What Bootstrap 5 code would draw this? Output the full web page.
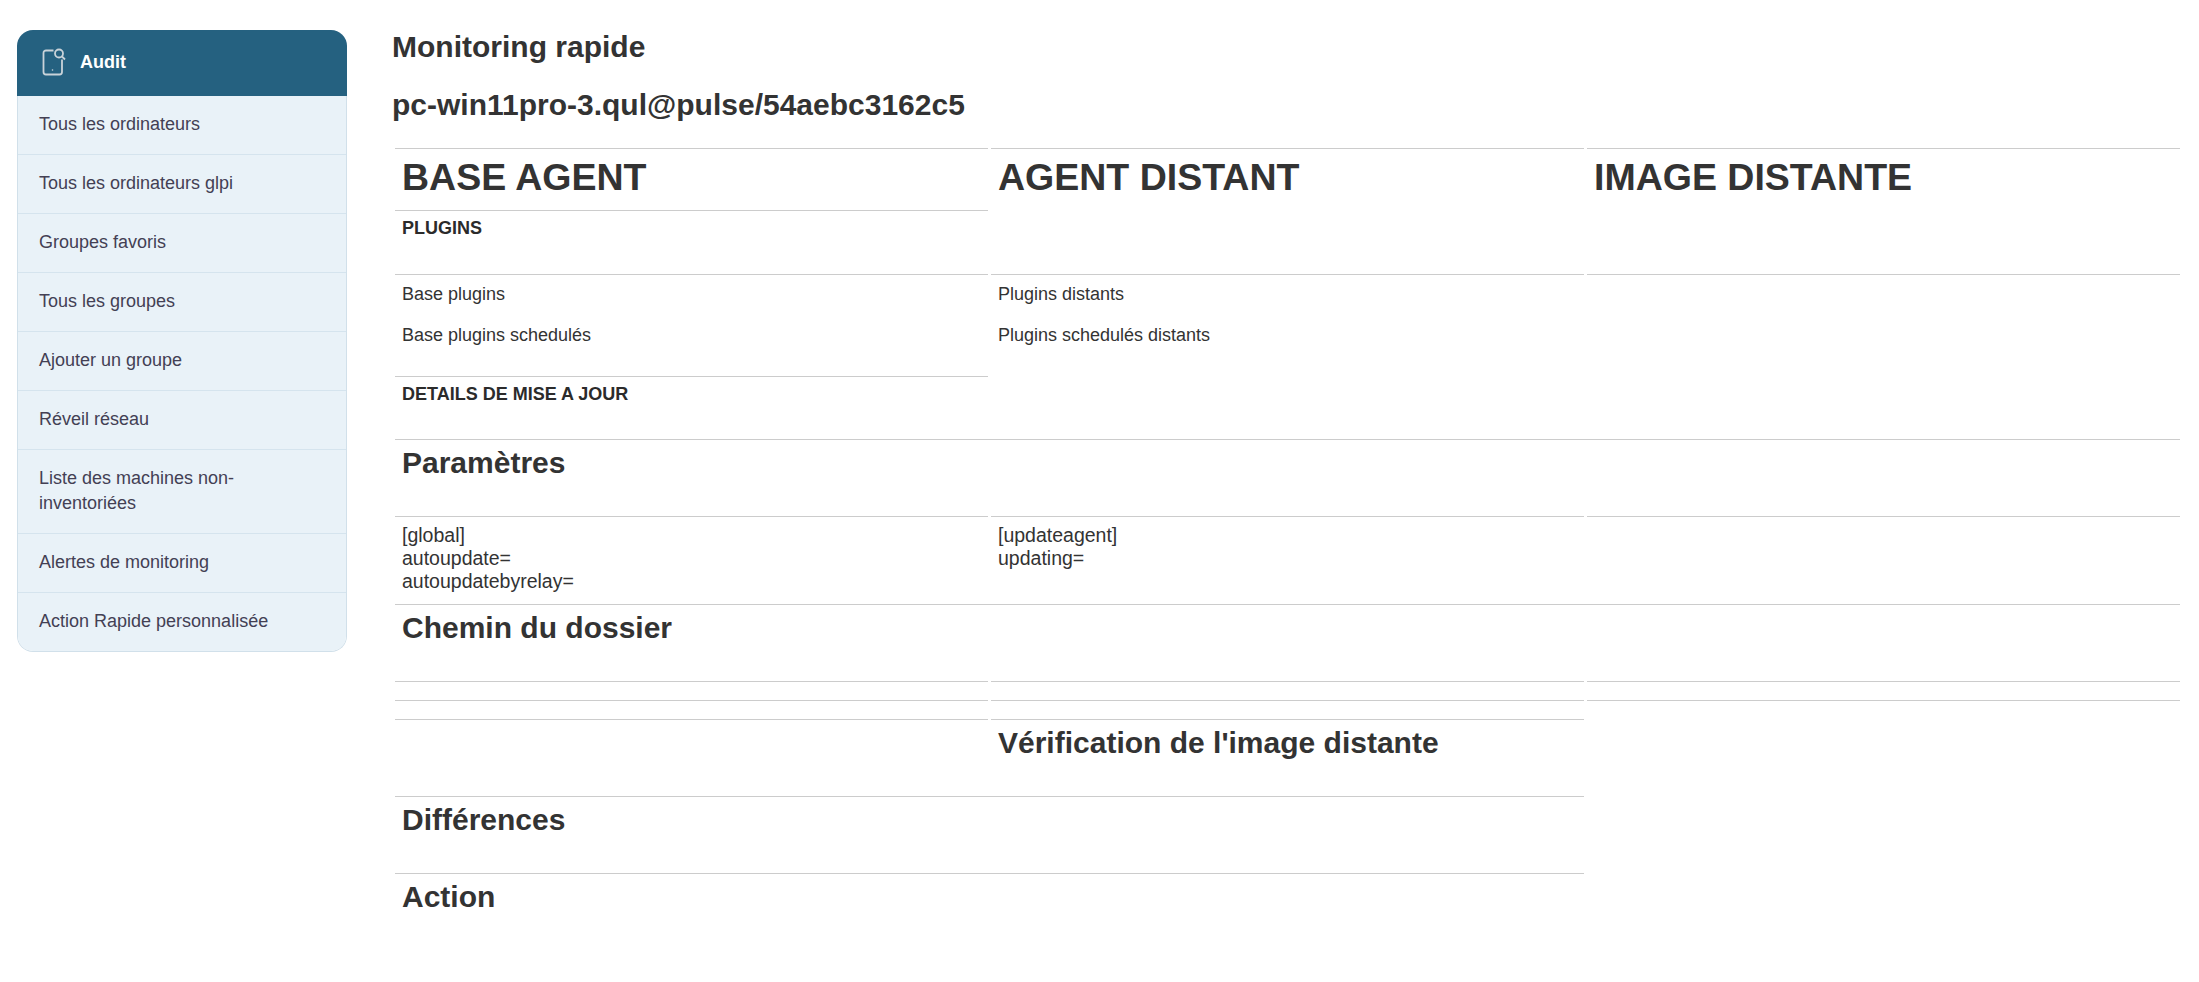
<!DOCTYPE html>
<html lang="fr">
<head>
<meta charset="utf-8">
<title>Monitoring rapide</title>
<link href="https://cdn.jsdelivr.net/npm/bootstrap@5.3.0/dist/css/bootstrap.min.css" rel="stylesheet">
<style>
body{font-family:"Liberation Sans",Arial,sans-serif;color:#333;background:#fff;font-size:15px}
.shell{padding:30px 16px 0 17px;gap:45px}
.side{width:330px;flex:none}
.side-head{background:#256180;color:#fff;border-radius:16px 16px 0 0;height:66px;padding:0 25px 2px;gap:14px;font-weight:700;font-size:18px}
.side-list{border-radius:0 0 16px 16px;overflow:hidden;border:1px solid #d1e0ea;border-top:0}
.side-list .list-group-item{background:#e9f2f8;border-color:#d5e4ee;border-width:0 0 1px;color:#434054;font-size:18px;line-height:25.200px;padding:16px 21px 16.800px;border-radius:0}
.side-list .list-group-item:last-child{border-bottom:0}
.main-col{min-width:0}
.page-title{font-size:30px;font-weight:700;color:#333;line-height:34px;margin:0 0 24px}
.audit{table-layout:fixed;width:1791px;border-collapse:separate;border-spacing:3px 2px;margin-top:8px}
.audit td{border-top:1px solid #ccc;padding:6px 7px;vertical-align:top;font-size:18px;line-height:25.200px}
.audit td.blank{border-top-color:transparent}
.audit td.cfg{font-size:19.500px;line-height:23px;padding-top:7px}
.audit td.plain{padding-top:7px}
.audit h1{font-size:37.500px;font-weight:700;line-height:42px;margin:0;color:#333}
.audit h2{font-size:30px;font-weight:700;line-height:34px;margin:0;color:#333}
.audit h3{font-size:18px;font-weight:700;line-height:20px;margin:1px 0 0;color:#2b2b2b;text-transform:uppercase}
.row-a{height:60px}
.row-b{height:62px}
.row-c{height:100px}
.row-d{height:61px}
.row-e{height:75px}
.row-f{height:86px}
.row-g{height:17px}
.audit td.tx{padding-top:7px}
.gap-line{margin-top:16px}
</style>
</head>
<body>
<div class="shell d-flex align-items-start">
  <aside class="side">
    <div class="side-head d-flex align-items-center">
      <svg width="24" height="28" viewBox="0 0 24 28" fill="none" stroke="#c9d3d9" stroke-width="1.800" aria-hidden="true"><path d="M11.500 2.500H4A2.500 2.500 0 0 0 1.500 5v19A2.500 2.500 0 0 0 4 26.500h13.500A2.500 2.500 0 0 0 20 24V11.500"/><circle cx="17" cy="5.500" r="4"/><path d="M20 8.500l3 3"/><circle cx="10.500" cy="22" r=".8" fill="#c9d3d9" stroke="none"/></svg>
      <span>Audit</span>
    </div>
    <div class="list-group side-list">
      <a class="list-group-item" href="#">Tous les ordinateurs</a>
      <a class="list-group-item" href="#">Tous les ordinateurs glpi</a>
      <a class="list-group-item" href="#">Groupes favoris</a>
      <a class="list-group-item" href="#">Tous les groupes</a>
      <a class="list-group-item" href="#">Ajouter un groupe</a>
      <a class="list-group-item" href="#">Réveil réseau</a>
      <a class="list-group-item" href="#">Liste des machines non-inventoriées</a>
      <a class="list-group-item" href="#">Alertes de monitoring</a>
      <a class="list-group-item" href="#">Action Rapide personnalisée</a>
    </div>
  </aside>
  <main class="main-col flex-grow-1">
    <div class="page-title">Monitoring rapide</div>
    <div class="page-title">pc-win11pro-3.qul@pulse/54aebc3162c5</div>
    <table class="audit">
      <tr class="row-a"><td class="tx"><h1>BASE AGENT</h1></td><td rowspan="2" class="tx"><h1>AGENT DISTANT</h1></td><td rowspan="2" class="tx"><h1>IMAGE DISTANTE</h1></td></tr>
      <tr class="row-b"><td><h3>Plugins</h3></td></tr>
      <tr class="row-c"><td class="plain">Base plugins<div class="gap-line">Base plugins schedulés</div></td><td rowspan="2" class="plain">Plugins distants<div class="gap-line">Plugins schedulés distants</div></td><td rowspan="2"></td></tr>
      <tr class="row-d"><td><h3>Details de mise a jour</h3></td></tr>
      <tr class="row-e"><td colspan="3"><h2>Paramètres</h2></td></tr>
      <tr class="row-f"><td class="cfg">[global]<br>autoupdate=<br>autoupdatebyrelay=</td><td class="cfg">[updateagent]<br>updating=</td><td></td></tr>
      <tr class="row-e"><td colspan="3"><h2>Chemin du dossier</h2></td></tr>
      <tr class="row-g"><td></td><td></td><td></td></tr>
      <tr class="row-g"><td></td><td></td><td></td></tr>
      <tr class="row-e"><td></td><td><h2>Vérification de l'image distante</h2></td><td rowspan="3" class="blank"></td></tr>
      <tr class="row-e"><td colspan="2"><h2>Différences</h2></td></tr>
      <tr class="row-e"><td colspan="2"><h2>Action</h2></td></tr>
    </table>
  </main>
</div>
<script src="https://cdn.jsdelivr.net/npm/bootstrap@5.3.0/dist/js/bootstrap.bundle.min.js"></script>
</body>
</html>
